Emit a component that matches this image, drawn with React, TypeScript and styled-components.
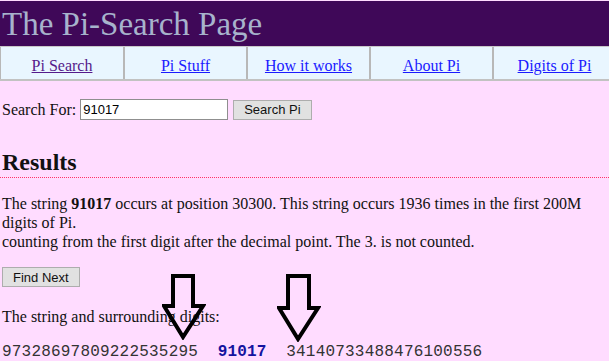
import styled, { createGlobalStyle } from 'styled-components';

const GlobalStyle = createGlobalStyle`
    html, body {
        margin: 0;
        padding: 0;
        background: #ffdcff;
    }
    body {
        font-family: "Liberation Serif", "Times New Roman", serif;
        font-size: 16px;
        color: #111;
    }
`;

const navItems = [
    { label: 'Pi Search', visited: true },
    { label: 'Pi Stuff', visited: false },
    { label: 'How it works', visited: false },
    { label: 'About Pi', visited: false },
    { label: 'Digits of Pi', visited: false },
];

const App = () => {
    return (
        <Page>
            <GlobalStyle />
            <Header>
                <Title>The Pi-Search Page</Title>
            </Header>
            <Nav>
                {navItems.map((item) => (
                    <NavCell key={item.label}>
                        <NavLink href="#" $visited={item.visited}>
                            {item.label}
                        </NavLink>
                    </NavCell>
                ))}
            </Nav>

            <Content>
                <SearchRow>
                    <Label>Search For:</Label>
                    <Input defaultValue="91017" />
                    <Button>Search Pi</Button>
                </SearchRow>

                <Heading>Results</Heading>
                <Divider />

                <Text>
                    The string <b>91017</b> occurs at position 30300. This string occurs 1936 times in the first
                    200M digits of Pi.
                    <br />
                    counting from the first digit after the decimal point. The 3. is not counted.
                </Text>

                <FindRow>
                    <Button>Find Next</Button>
                </FindRow>

                <Caption>The string and surrounding digits:</Caption>

                <Digits>
                    97328697809222535295&nbsp;&nbsp;<Match>91017</Match>&nbsp;&nbsp;34140733488476100556
                </Digits>
            </Content>

            <Arrow $left={162} $top={274} width={44} height={66} viewBox="0 0 44 66">
                <path d="M11 2 H31 V32 H41 L21 63 L2 32 H11 Z" />
            </Arrow>
            <Arrow $left={277} $top={274} width={44} height={68} viewBox="0 0 44 68">
                <path d="M11 2 H32 V34 H41 L21 65 L2 34 H11 Z" />
            </Arrow>
        </Page>
    );
};

export default App;

const Page = styled.div`
    position: relative;
    width: 609px;
    height: 361px;
    overflow: hidden;
`;

const Header = styled.div`
    margin-top: 1px;
    height: 45px;
    background: #3f0858;
    display: flex;
    align-items: center;
`;

const Title = styled.h1`
    margin: 2px 0 0 2px;
    font-weight: normal;
    font-size: 33px;
    color: #a7b3cc;
    line-height: 1;
`;

const Nav = styled.div`
    display: flex;
    height: 35px;
    background: #e9f6ff;
    border-bottom: 2px solid #c2c2c2;
    border-top: 1px solid #c8c8c8;
    box-sizing: border-box;
`;

const NavCell = styled.div`
    flex: 0 0 123px;
    display: flex;
    align-items: center;
    justify-content: center;
    border-left: 2px solid #b8b8b8;
    box-sizing: border-box;
    &:first-child {
        border-left-width: 1px;
    }
`;

const NavLink = styled.a<{ $visited: boolean }>`
    color: ${(p) => (p.$visited ? '#551a8b' : '#1a1aff')};
    text-decoration: underline;
    font-size: 16px;
    padding-top: 5px;
`;

const Content = styled.div`
    padding: 0 2px;
`;

const SearchRow = styled.div`
    display: flex;
    align-items: center;
    margin-top: 18px;
    height: 21px;
`;

const Label = styled.span`
    margin-right: 4px;
`;

const Input = styled.input`
    width: 148px;
    height: 21px;
    box-sizing: border-box;
    border: 1px solid #8f8f8f;
    padding: 1px 2px;
    font-family: "Liberation Sans", Arial, sans-serif;
    font-size: 13px;
    background: #fff;
    margin-right: 5px;
`;

const Button = styled.button`
    height: 20px;
    box-sizing: border-box;
    padding: 0 10px;
    background: #e1e1e1;
    border: 1px solid #adadad;
    border-radius: 0;
    font-family: "Liberation Sans", Arial, sans-serif;
    font-size: 13px;
    color: #111;
`;

const Heading = styled.h2`
    margin: 28px 0 0;
    font-size: 24px;
    font-weight: bold;
    line-height: 28px;
`;

const Divider = styled.div`
    margin: 1px -2px 0;
    border-top: 1px dotted #ff3366;
`;

const Text = styled.p`
    margin: 16px 0 0;
    line-height: 19px;
`;

const FindRow = styled.div`
    margin-top: 16px;
`;

const Caption = styled.p`
    margin: 20px 0 0;
    line-height: 19px;
`;

const Digits = styled.div`
    margin-top: 17px;
    font-family: "Liberation Mono", "Courier New", monospace;
    font-size: 16px;
    letter-spacing: 0.2px;
    color: #333;
`;

const Match = styled.b`
    color: #1414a0;
`;

const Arrow = styled.svg<{ $left: number; $top: number }>`
    position: absolute;
    left: ${(p) => p.$left}px;
    top: ${(p) => p.$top}px;
    fill: none;
    stroke: #000;
    stroke-width: 4;
    stroke-linejoin: miter;
`;
